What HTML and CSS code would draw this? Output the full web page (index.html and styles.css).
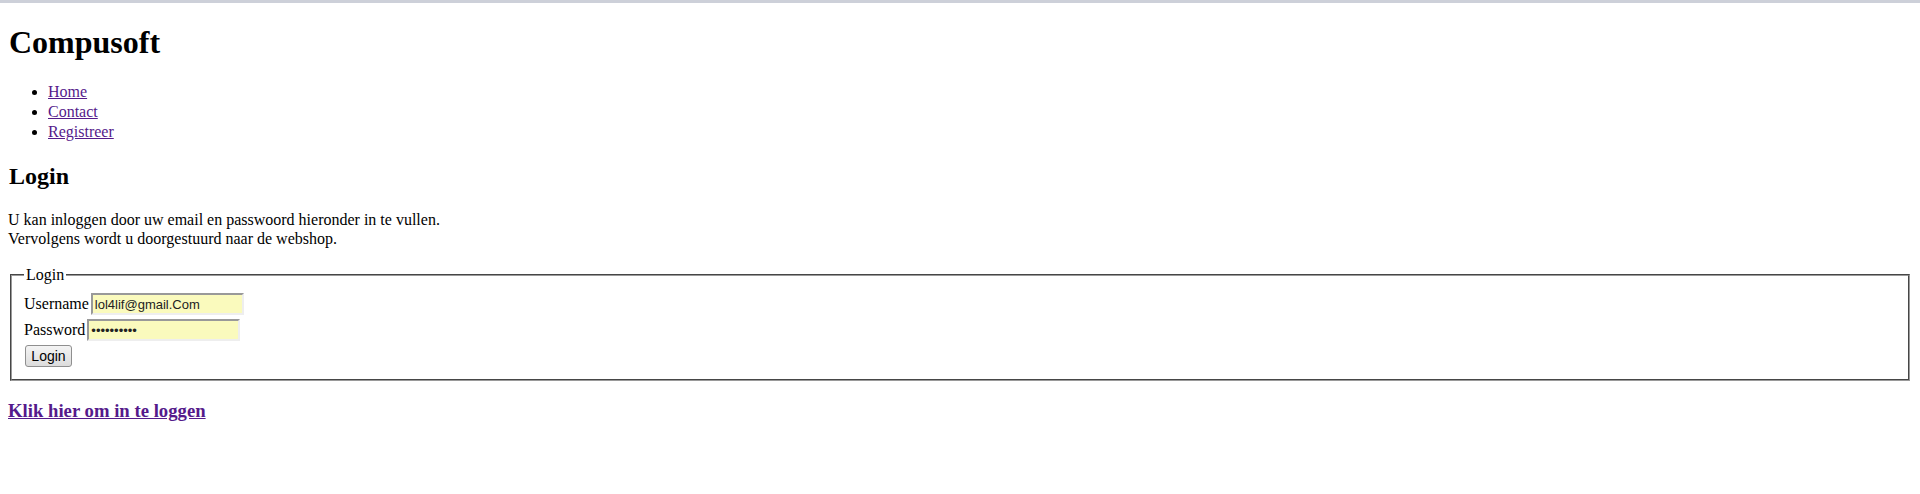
FILE: index.html
```html
<!DOCTYPE html>
<html>
<head>
<meta charset="utf-8">
<title>Compusoft</title>
<link rel="stylesheet" href="styles.css">
</head>
<body>
<div class="topbar"></div>
<div class="page">
<h1 class="title">Compusoft</h1>
<ul class="nav">
<li><a href="#">Home</a></li>
<li><a href="#">Contact</a></li>
<li><a href="#">Registreer</a></li>
</ul>
<h2 class="heading">Login</h2>
<p class="intro">U kan inloggen door uw email en passwoord hieronder in te vullen.<br>Vervolgens wordt u doorgestuurd naar de webshop.</p>
<form class="login-form">
<fieldset class="login-box">
<legend class="login-legend">Login</legend>
<div class="row"><label class="lbl">Username</label><input class="field" type="text" value="lol4lif@gmail.Com"></div>
<div class="row"><label class="lbl">Password</label><input class="field" type="password" value="abcdefghij"></div>
<div class="row"><button class="btn" type="button">Login</button></div>
</fieldset>
</form>
<h3 class="bottom-link"><a href="#">Klik hier om in te loggen</a></h3>
</div>
</body>
</html>
```
FILE: styles.css
```css
html, body {
  margin: 0;
  padding: 0;
  background: #fff;
}
body {
  font-family: "Liberation Serif", "Times New Roman", serif;
  font-size: 16px;
  color: #000;
}
.topbar {
  height: 3px;
  background: #cdd0d9;
}
.page {
  padding: 0 8px;
  display: flow-root;
}
a {
  color: #551a8b;
}
.title {
  font-size: 32px;
  margin: 21px 0 21px 1px;
  line-height: 37px;
}
.nav {
  margin: 0;
  padding-left: 40px;
  line-height: 20px;
}
.heading {
  font-size: 24px;
  margin: 20px 0 20px 1px;
  line-height: 28px;
}
.intro {
  margin: 0 0 18px 0;
  line-height: 19px;
}
.login-form {
  margin: 0;
}
.login-box {
  margin: 0 2px;
  border: 2px groove #9a9a9a;
  padding: 9px 10px 12px 12px;
}
.login-legend {
  padding: 0 2px;
  margin-left: 0;
  line-height: 18px;
}
.row {
  display: flex;
  align-items: center;
  gap: 2px;
  height: 22px;
  margin-top: 4px;
}
.row:first-of-type {
  margin-top: 0;
}
.lbl {
  line-height: 18px;
}
.field {
  box-sizing: border-box;
  width: 153px;
  height: 22px;
  margin: 0;
  padding: 1px 2px;
  border: 2px solid;
  border-color: #999 #eee #eee #999;
  background: #fafabd;
  font-family: "Liberation Sans", Arial, sans-serif;
  font-size: 13px;
  color: #222;
}
.btn {
  box-sizing: border-box;
  width: 47px;
  height: 22px;
  margin: 0 0 0 1px;
  padding: 0;
  border: 1px solid #8f8f8f;
  border-radius: 3px;
  background: linear-gradient(#f4f4f4, #dcdcdc);
  font-family: "Liberation Sans", Arial, sans-serif;
  font-size: 14px;
  color: #000;
}
.bottom-link {
  font-size: 18.72px;
  margin: 19px 0;
}
```
